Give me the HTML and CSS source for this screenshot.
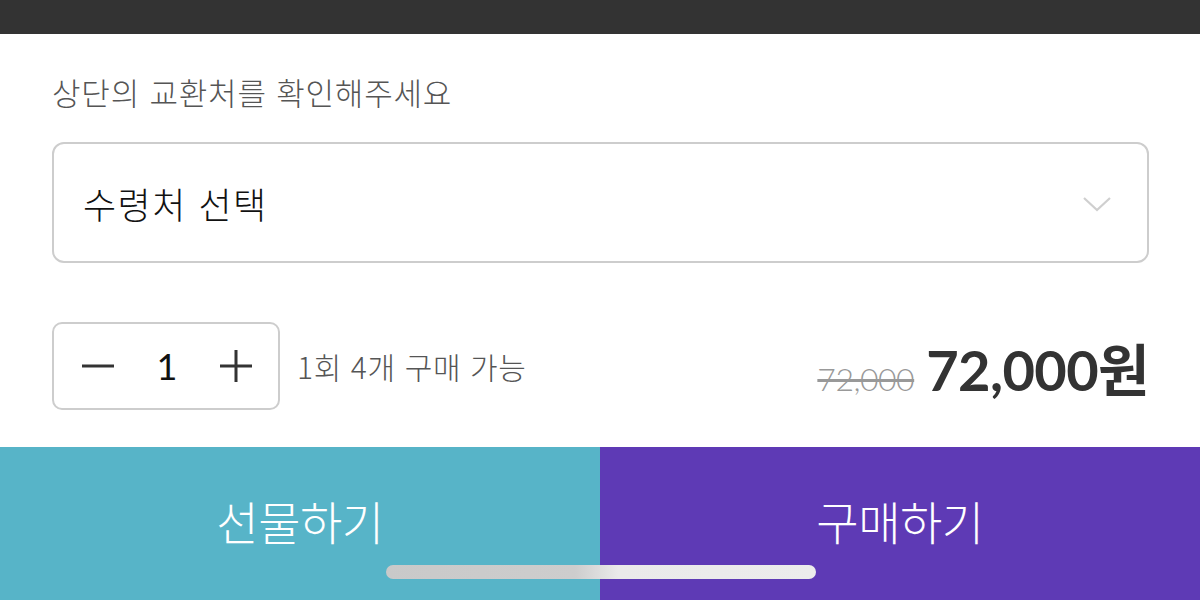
FILE: index.html
```html
<!DOCTYPE html>
<html lang="ko">
<head>
<meta charset="utf-8">
<link rel="stylesheet" href="styles.css">
</head>
<body>
<div class="topbar"></div>
<main class="sheet">
  <p class="hint">상단의 교환처를 확인해주세요</p>
  <div class="select">
    <span class="select-text">수령처 선택</span>
    <svg class="chevron" width="30" height="18" viewBox="0 0 30 18"><path d="M2 3 L15 15 L28 3" fill="none" stroke="#cfcfcf" stroke-width="2.2"/></svg>
  </div>
  <div class="row">
    <div class="qty">
      <svg class="qbtn" width="34" height="34" viewBox="0 0 34 34"><path d="M1 17 H33" stroke="#333" stroke-width="3"/></svg>
      <span class="qnum">1</span>
      <svg class="qbtn" width="34" height="34" viewBox="0 0 34 34"><path d="M1 17 H33 M17 1 V33" stroke="#333" stroke-width="3"/></svg>
    </div>
    <span class="limit">1회 4개 구매 가능</span>
    <div class="price">
      <span class="old">72,000</span>
      <span class="now">72,000원</span>
    </div>
  </div>
</main>
<div class="actions">
  <button class="btn gift">선물하기</button>
  <button class="btn buy">구매하기</button>
  <div class="home"></div>
</div>
</body>
</html>
```
FILE: styles.css
```css
* { box-sizing: border-box; }
html, body { margin: 0; padding: 0; }
body {
  width: 1200px;
  height: 600px;
  overflow: hidden;
  background: #fff;
  font-family: "Noto Sans CJK KR", "Noto Sans", sans-serif;
  display: flex;
  flex-direction: column;
}
.topbar { height: 34px; background: #333; flex: none; }
.sheet {
  flex: 1;
  padding: 38px 51px 0 52px;
  display: flex;
  flex-direction: column;
}
.hint {
  margin: 0;
  font-size: 31px;
  line-height: 40px;
  color: #555;
  font-weight: 300;
  letter-spacing: 0.8px;
}
.select {
  margin-top: 30px;
  height: 121px;
  border: 2px solid #cdcdcd;
  border-radius: 12px;
  display: flex;
  align-items: center;
  justify-content: space-between;
  padding: 0 35px 0 29px;
}
.select-text {
  font-size: 36px;
  font-weight: 300;
  color: #111;
  letter-spacing: 1.5px;
}
.chevron { margin-top: 2px; }
.row {
  margin-top: 59px;
  display: flex;
  align-items: center;
}
.qty {
  width: 228px;
  height: 88px;
  border: 2px solid #cdcdcd;
  border-radius: 10px;
  display: flex;
  align-items: center;
  justify-content: space-between;
  padding: 0 25px 0 27px;
}
.qnum {
  font-family: "Lato", "Noto Sans", sans-serif;
  font-size: 36px;
  color: #111;
}
.limit {
  margin-left: 17px;
  font-size: 30px;
  font-weight: 300;
  color: #555;
  letter-spacing: 0.6px;
}
.price {
  margin-left: auto;
  display: flex;
  align-items: baseline;
  gap: 12px;
}
.old {
  font-family: "Lato", sans-serif;
  font-weight: 300;
  font-size: 32px;
  color: #999;
  text-decoration: line-through;
  letter-spacing: -0.5px;
}
.now {
  font-family: "Lato", "Noto Sans CJK KR", sans-serif;
  font-weight: 700;
  font-size: 56px;
  color: #333;
  letter-spacing: -0.6px;
}
.actions {
  position: relative;
  height: 153px;
  flex: none;
  display: flex;
}
.btn {
  flex: 1;
  border: 0;
  margin: 0;
  padding: 0 0 8px;
  font-family: "Noto Sans CJK KR", sans-serif;
  font-size: 46px;
  font-weight: 300;
  color: #fff;
  letter-spacing: -0.5px;
}
.gift { background: #57b4c8; }
.buy { background: #5e3ab5; }
.home {
  position: absolute;
  left: 386px;
  top: 118px;
  width: 430px;
  height: 14px;
  border-radius: 7px;
  background: linear-gradient(90deg, #c9c9c9 0%, #cdcdcd 44%, #eaeaea 54%, #ececec 100%);
}
```
